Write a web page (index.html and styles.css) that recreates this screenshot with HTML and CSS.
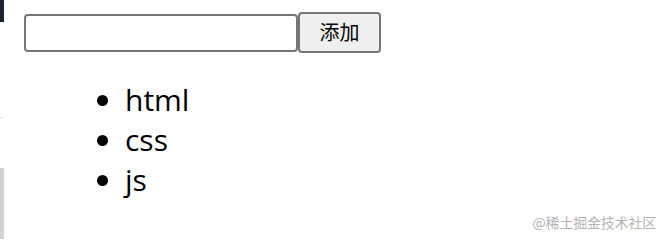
FILE: index.html
```html
<!DOCTYPE html>
<html lang="zh">
<head>
<meta charset="utf-8">
<title>Todo</title>
<link rel="stylesheet" href="styles.css">
</head>
<body>
<div class="edge">
  <div class="edge-dark"></div>
  <div class="edge-line"></div>
  <div class="edge-grey"></div>
</div>
<main class="app">
  <div class="form-row">
    <input class="field" type="text">
    <button class="add-btn" type="button">添加</button>
  </div>
  <ul class="list">
    <li>html</li>
    <li>css</li>
    <li>js</li>
  </ul>
</main>
<div class="watermark">@稀土掘金技术社区</div>
</body>
</html>
```
FILE: styles.css
```css
html, body {
  margin: 0;
  padding: 0;
  background: #ffffff;
}
body {
  width: 662px;
  height: 239px;
  overflow: hidden;
  font-family: "Open Sans", "Noto Sans", sans-serif;
  color: #000;
}
.app {
  padding: 12px 0 0 24px;
}
.form-row {
  display: flex;
  align-items: center;
}
.field {
  box-sizing: border-box;
  width: 274px;
  height: 38px;
  margin: 0;
  border: 2px solid #767676;
  border-radius: 4px;
  background: #fff;
  padding: 0 6px;
  font-size: 20px;
}
.add-btn {
  box-sizing: border-box;
  width: 83px;
  height: 41px;
  margin: 0;
  border: 2px solid #767676;
  border-radius: 4px;
  background: #efefef;
  padding: 0 0 2px 0;
  font-family: "Noto Sans CJK SC", "Noto Sans", sans-serif;
  font-size: 20px;
  color: #000;
}
.list {
  margin: 27px 0 0 0;
  padding-left: 101px;
  font-size: 30px;
  line-height: 40px;
}
.edge {
  position: absolute;
  left: 0;
  top: 0;
  width: 4px;
  height: 239px;
}
.edge-dark {
  position: absolute;
  left: 0;
  top: 0;
  width: 4px;
  height: 22px;
  background: #1c2433;
}
.edge-line {
  position: absolute;
  left: 0;
  top: 117px;
  width: 4px;
  height: 1px;
  background: #e4e4e4;
}
.edge-grey {
  position: absolute;
  left: 0;
  top: 168px;
  width: 4px;
  height: 71px;
  background: #d2d2d2;
}
.watermark {
  position: absolute;
  right: 6px;
  bottom: 8px;
  font-family: "Noto Sans CJK SC", sans-serif;
  font-size: 14px;
  color: #b4b4b4;
  letter-spacing: -0.2px;
}
```
